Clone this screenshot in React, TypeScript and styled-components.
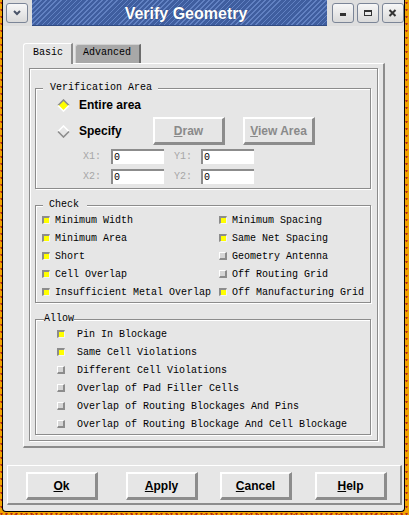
import React from "react";
import styled, { createGlobalStyle } from "styled-components";

const BG = "#e6e6e6";
const SH = "#8c8c8c";

const GlobalStyle = createGlobalStyle`
  html, body { margin: 0; padding: 0; }
  body {
    width: 409px;
    height: 515px;
    overflow: hidden;
    background-color: #f2a400;
    background-image:
      radial-gradient(circle at 30% 40%, #b3261a 0.9px, transparent 1.3px),
      radial-gradient(circle at 70% 80%, #c43a12 0.9px, transparent 1.3px),
      radial-gradient(circle at 50% 20%, #84c020 0.7px, transparent 1.1px);
    background-size: 5px 7px, 9px 4px, 13px 11px;
    font-family: "Liberation Mono", "DejaVu Sans Mono", monospace;
  }
  #root { width: 409px; height: 515px; }
`;

const Window = styled.div`
  margin-left: 2px;
  width: 403px;
  height: 512px;
  box-sizing: border-box;
  border: 1px solid #000;
  border-top: none;
  border-radius: 0 0 4px 4px;
  background: ${BG};
  display: flex;
  flex-direction: column;
  overflow: hidden;
`;

const TitleBar = styled.div`
  display: flex;
  height: 26px;
  flex-shrink: 0;
  background: #dedede;
`;

const TitleSide = styled.div<{ $w: number; $pl: number }>`
  box-sizing: border-box;
  width: ${(p) => p.$w}px;
  padding: 3px 0 0 ${(p) => p.$pl}px;
  display: flex;
  gap: 3px;
  align-items: flex-start;
`;

const TitleStripe = styled.div`
  flex: 1;
  display: flex;
  justify-content: center;
  align-items: center;
  padding: 2px 0 0 13px;
  background: repeating-linear-gradient(
    135deg,
    #3f5e9f 0px,
    #3f5e9f 2.5px,
    #6181c2 2.5px,
    #6181c2 3.6px
  );
  border-bottom: 1px solid #2f4a82;
  box-sizing: border-box;
  color: #fff;
  font: bold 16px "Liberation Sans", Arial, sans-serif;
  text-shadow: 0 0 1px rgba(20, 30, 60, 0.6);
`;

const WinButton = styled.div`
  box-sizing: border-box;
  width: 22px;
  height: 20px;
  border: 1px solid #7b8597;
  border-radius: 3px;
  background: linear-gradient(#f7f7f7, #dadada);
  display: flex;
  align-items: center;
  justify-content: center;
`;

const Body = styled.div`
  flex: 1;
  display: flex;
  flex-direction: column;
  padding-top: 17px;
`;

const Notebook = styled.div`
  margin-left: 20px;
  width: 362px;
  display: flex;
  flex-direction: column;
`;

const TabRow = styled.div`
  display: flex;
  align-items: flex-end;
  height: 20px;
  gap: 2px;
`;

const Tab = styled.div<{ $active?: boolean }>`
  box-sizing: border-box;
  position: relative;
  z-index: ${(p) => (p.$active ? 1 : 0)};
  height: ${(p) => (p.$active ? 21 : 19)}px;
  margin-bottom: ${(p) => (p.$active ? -1 : 0)}px;
  padding: ${(p) => (p.$active ? "3px 8px 0 9px" : "2px 8px 0 7px")};
  border-style: solid;
  border-width: 1px 2px 0 1px;
  border-color: ${(p) =>
    p.$active ? `#fff ${SH} transparent #fff` : `#d2d2d2 #6c6c6c transparent #d2d2d2`};
  border-top-left-radius: 3px;
  background: ${(p) => (p.$active ? BG : "#a8a8a8")};
  font-size: 10px;
  line-height: 12px;
  color: #000;
`;

const Panel = styled.div`
  box-sizing: border-box;
  height: 385px;
  border-style: solid;
  border-width: 1px 2px 2px 1px;
  border-color: #fff ${SH} ${SH} #fff;
  padding: 4px 5px 5px 5px;
`;

const PageFrame = styled.div`
  box-sizing: border-box;
  height: 373px;
  border: 1px solid ${SH};
  box-shadow: inset 1px 1px 0 #fff, 1px 1px 0 #fff;
  padding: 19px 6px 0 5px;
  display: flex;
  flex-direction: column;
`;

const Group = styled.div<{ $mt: number; $pb: number }>`
  margin-top: ${(p) => p.$mt}px;
  padding-bottom: ${(p) => p.$pb}px;
  border: 1px solid ${SH};
  box-shadow: inset 1px 1px 0 #fff, 1px 1px 0 #fff;
`;

const GroupTitle = styled.div<{ $ml: number; $pl: number; $pr: number }>`
  width: fit-content;
  height: 12px;
  line-height: 12px;
  margin: -7px 0 0 ${(p) => p.$ml}px;
  padding: 0 ${(p) => p.$pr}px 0 ${(p) => p.$pl}px;
  background: ${BG};
  font-size: 10px;
  color: #000;
`;

const VRow = styled.div<{ $mt: number; $h: number; $pl: number }>`
  display: flex;
  align-items: center;
  margin-top: ${(p) => p.$mt}px;
  height: ${(p) => p.$h}px;
  padding-left: ${(p) => p.$pl}px;
`;

const RadioItem = styled.div<{ $w?: number }>`
  display: flex;
  align-items: center;
  width: ${(p) => (p.$w ? `${p.$w}px` : "auto")};
  gap: 9px;
  font: bold 12px "Liberation Sans", Arial, sans-serif;
  color: #000;
`;

const Btn = styled.div<{ $ml?: number; $disabled?: boolean }>`
  box-sizing: border-box;
  flex-shrink: 0;
  width: 72px;
  height: 28px;
  margin-left: ${(p) => p.$ml ?? 0}px;
  padding-top: 1px;
  border-style: solid;
  border-width: 2px 3px 3px 2px;
  border-color: #fff ${SH} ${SH} #fff;
  display: flex;
  align-items: center;
  justify-content: center;
  font: bold 12px "Liberation Sans", Arial, sans-serif;
  color: ${(p) => (p.$disabled ? "#8a8a8a" : "#000")};
`;

const CoordLabel = styled.div<{ $w: number; $ml?: number }>`
  width: ${(p) => p.$w}px;
  margin-left: ${(p) => p.$ml ?? 0}px;
  font-size: 10px;
  color: #a6a6a6;
`;

const Entry = styled.div`
  box-sizing: border-box;
  width: 53px;
  height: 15px;
  border-style: solid;
  border-width: 2px 0 0 2px;
  border-color: ${SH};
  background: #fff;
  padding-left: 1px;
  font-size: 10px;
  line-height: 13px;
  color: #000;
`;

const CheckGrid = styled.div<{ $cols: string; $pl: number }>`
  display: grid;
  grid-template-columns: ${(p) => p.$cols};
  grid-auto-rows: 18px;
  padding-left: ${(p) => p.$pl}px;
`;

const CheckItem = styled.div<{ $gap: number }>`
  display: flex;
  align-items: center;
  gap: ${(p) => p.$gap}px;
  font-size: 10px;
  color: #000;
  white-space: nowrap;
`;

const Box = styled.span<{ $on?: boolean }>`
  box-sizing: border-box;
  display: block;
  width: 8px;
  height: 8px;
  flex-shrink: 0;
  border-style: solid;
  border-width: ${(p) => (p.$on ? "2px 1px 1px 2px" : "1px 2px 2px 1px")};
  border-color: ${(p) => (p.$on ? `${SH} #f4f4f4 #f4f4f4 ${SH}` : `#fff ${SH} ${SH} #fff`)};
  background: ${(p) => (p.$on ? "#ffff00" : "#d6d6d6")};
`;

const ButtonFrame = styled.div`
  box-sizing: border-box;
  margin: 17px 0 0 4px;
  width: 395px;
  height: 40px;
  border-style: solid;
  border-width: 1px 2px 2px 1px;
  border-color: #fff ${SH} ${SH} #fff;
  padding: 6px 0 0 18px;
  display: flex;
  align-items: flex-start;
`;

const Diamond = ({ on }: { on?: boolean }) => (
  <svg width="13" height="13" viewBox="0 0 13 13">
    <polygon points="6.5,1 12,6.5 6.5,12 1,6.5" fill={on ? "#ffff00" : BG} />
    <polyline points="1,6.5 6.5,1 12,6.5" fill="none" stroke={on ? SH : "#fff"} strokeWidth="1.6" />
    <polyline points="1,6.5 6.5,12 12,6.5" fill="none" stroke={on ? "#fff" : SH} strokeWidth="1.6" />
  </svg>
);

const Label = ({ text }: { text: string }) => (
  <span>
    <u>{text[0]}</u>
    {text.slice(1)}
  </span>
);

const checkItems: [string, boolean][] = [
  ["Minimum Width", true],
  ["Minimum Spacing", true],
  ["Minimum Area", true],
  ["Same Net Spacing", true],
  ["Short", true],
  ["Geometry Antenna", false],
  ["Cell Overlap", true],
  ["Off Routing Grid", false],
  ["Insufficient Metal Overlap", true],
  ["Off Manufacturing Grid", true],
];

const allowItems: [string, boolean][] = [
  ["Pin In Blockage", true],
  ["Same Cell Violations", true],
  ["Different Cell Violations", false],
  ["Overlap of Pad Filler Cells", false],
  ["Overlap of Routing Blockages And Pins", false],
  ["Overlap of Routing Blockage And Cell Blockage", false],
];

export default function App() {
  return (
    <>
      <GlobalStyle />
      <Window>
        <TitleBar>
          <TitleSide $w={29} $pl={3}>
            <WinButton>
              <svg width="20" height="18" viewBox="0 0 20 18">
                <polyline points="7,7 10,10 13,7" fill="none" stroke="#4a5468" strokeWidth="2" />
              </svg>
            </WinButton>
          </TitleSide>
          <TitleStripe>Verify Geometry</TitleStripe>
          <TitleSide $w={77} $pl={5}>
            <WinButton>
              <svg width="20" height="18" viewBox="0 0 20 18">
                <rect x="7" y="9" width="6" height="3" fill="#333" />
              </svg>
            </WinButton>
            <WinButton>
              <svg width="20" height="18" viewBox="0 0 20 18">
                <rect x="6.5" y="6.5" width="7" height="5" fill="none" stroke="#333" strokeWidth="1" />
                <rect x="6" y="6" width="8" height="2" fill="#333" />
              </svg>
            </WinButton>
            <WinButton>
              <svg width="20" height="18" viewBox="0 0 20 18">
                <path d="M6.5 6 L12.5 12 M12.5 6 L6.5 12" stroke="#333" strokeWidth="2" />
              </svg>
            </WinButton>
          </TitleSide>
        </TitleBar>
        <Body>
          <Notebook>
            <TabRow>
              <Tab $active>Basic</Tab>
              <Tab>Advanced</Tab>
            </TabRow>
            <Panel>
              <PageFrame>
                <Group $mt={0} $pb={4}>
                  <GroupTitle $ml={7} $pl={7} $pr={6}>Verification Area</GroupTitle>
                  <VRow $mt={3} $h={16} $pl={21}>
                    <RadioItem>
                      <Diamond on />
                      Entire area
                    </RadioItem>
                  </VRow>
                  <VRow $mt={4} $h={28} $pl={21}>
                    <RadioItem $w={96}>
                      <Diamond />
                      Specify
                    </RadioItem>
                    <Btn $disabled>
                      <Label text="Draw" />
                    </Btn>
                    <Btn $disabled $ml={18}>
                      <Label text="View Area" />
                    </Btn>
                  </VRow>
                  <VRow $mt={4} $h={15} $pl={47}>
                    <CoordLabel $w={28}>X1:</CoordLabel>
                    <Entry>0</Entry>
                    <CoordLabel $w={27} $ml={10}>Y1:</CoordLabel>
                    <Entry>0</Entry>
                  </VRow>
                  <VRow $mt={5} $h={15} $pl={47}>
                    <CoordLabel $w={28}>X2:</CoordLabel>
                    <Entry>0</Entry>
                    <CoordLabel $w={27} $ml={10}>Y2:</CoordLabel>
                    <Entry>0</Entry>
                  </VRow>
                </Group>
                <Group $mt={16} $pb={1}>
                  <GroupTitle $ml={7} $pl={6} $pr={8}>Check</GroupTitle>
                  <CheckGrid $cols="177px 1fr" $pl={6}>
                    {checkItems.map(([t, on]) => (
                      <CheckItem key={t} $gap={5}>
                        <Box $on={on} />
                        {t}
                      </CheckItem>
                    ))}
                  </CheckGrid>
                </Group>
                <Group $mt={16} $pb={1}>
                  <GroupTitle $ml={8} $pl={0} $pr={0}>Allow</GroupTitle>
                  <CheckGrid $cols="1fr" $pl={21}>
                    {allowItems.map(([t, on]) => (
                      <CheckItem key={t} $gap={12}>
                        <Box $on={on} />
                        {t}
                      </CheckItem>
                    ))}
                  </CheckGrid>
                </Group>
              </PageFrame>
            </Panel>
          </Notebook>
          <ButtonFrame>
            <Btn>
              <Label text="Ok" />
            </Btn>
            <Btn $ml={28}>
              <Label text="Apply" />
            </Btn>
            <Btn $ml={22}>
              <Label text="Cancel" />
            </Btn>
            <Btn $ml={23}>
              <Label text="Help" />
            </Btn>
          </ButtonFrame>
        </Body>
      </Window>
    </>
  );
}
